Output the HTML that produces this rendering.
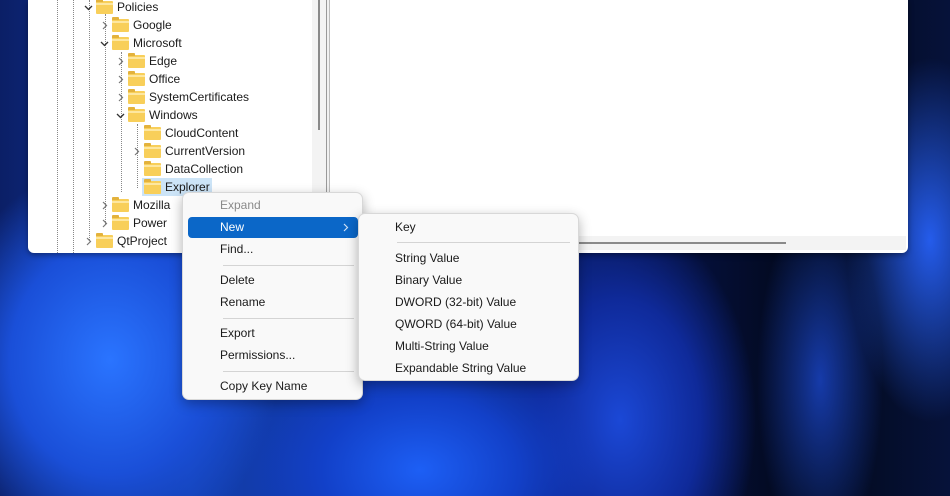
<!DOCTYPE html>
<html><head><meta charset="utf-8"><style>
*{margin:0;padding:0;box-sizing:border-box}
body{width:950px;height:496px;overflow:hidden;position:relative;font-family:"Liberation Sans",sans-serif;font-size:12px;color:#1a1a1a;
background:
radial-gradient(ellipse 120px 260px at 930px 240px,rgba(40,100,255,.9) 0%,transparent 70%),
radial-gradient(ellipse 90px 260px at 820px 380px,rgba(30,80,230,.7) 0%,transparent 70%),
radial-gradient(ellipse 220px 160px at 420px 470px,#1d5ff5 0%,#1240c8 45%,transparent 80%),
radial-gradient(ellipse 200px 230px at 110px 360px,#2a74ff 0%,#1a4fd8 50%,transparent 85%),
radial-gradient(ellipse 160px 240px at 620px 420px,#1b48d6 0%,#0f2a9a 50%,transparent 85%),
linear-gradient(90deg,#0b1f66 0%,#1340b0 20%,#0e2f98 45%,#06134a 68%,#020818 85%,#06123a 100%);}
.win{position:absolute;left:28px;top:0;width:880px;height:253px;background:#fff;border-radius:0 0 6px 6px;box-shadow:0 2px 6px rgba(0,0,0,.4);overflow:hidden}
.vs{position:absolute;left:284px;top:0;width:14px;height:253px;background:#f3f3f3}
.vs i{position:absolute;left:6px;top:0;width:2px;height:130px;background:#8a8a8a}
.div{position:absolute;left:298px;top:0;width:4px;height:253px;background:#f0f0f0;border-left:1px solid #999;border-right:1px solid #bbb}
.hs{position:absolute;left:302px;top:236px;width:576px;height:14px;background:#f3f3f3}
.hs i{position:absolute;left:248px;top:6px;width:208px;height:2px;background:#8a8a8a}
.dl{position:absolute;border-left:1px dotted #888;width:0}
.row{position:absolute;height:18px;line-height:18px;white-space:nowrap;font-size:12px}
.f{display:inline-block;position:absolute;top:3px;width:17px;height:13px;background:#f8cf5a;border-radius:1px}
.f:before{content:"";position:absolute;left:0;top:-2px;width:7px;height:3px;background:#e3b23c;border-radius:1px 1px 0 0}
.f:after{content:"";position:absolute;left:0;top:2px;width:17px;height:2px;background:#fde7a0}
.ch{position:absolute;top:5px;left:1px;width:9px;height:9px}
.sel{background:#cce4f7}
.menu{position:absolute;background:#f9f9f9;border:1px solid #d8d8d8;border-radius:7px;box-shadow:0 4px 12px rgba(0,0,0,.3)}
.mi{position:absolute;left:0;right:0;height:20px;line-height:20px;font-size:12px;color:#1a1a1a}
.sep{position:absolute;height:1px;background:#d4d4d4}
</style></head><body>
<svg width="0" height="0" style="position:absolute"><defs>
<symbol id="r" viewBox="0 0 9 9"><path d="M3 1 L6.5 4.5 L3 8" fill="none" stroke="#777" stroke-width="1.2"/></symbol>
<symbol id="d" viewBox="0 0 9 9"><path d="M1 3 L4.5 6.5 L8 3" fill="none" stroke="#333" stroke-width="1.3"/></symbol>
</defs></svg>
<div class="win">
 <div class="dl" style="left:29px;top:0;height:253px"></div>
 <div class="dl" style="left:45px;top:0;height:253px"></div>
 <div class="dl" style="left:61px;top:0;height:240px"></div>
 <div class="dl" style="left:77px;top:14px;height:210px"></div>
 <div class="dl" style="left:93px;top:52px;height:140px"></div>
 <div class="dl" style="left:109px;top:124px;height:64px"></div>
 <div class="vs"><i></i></div>
 <div class="div"></div>
 <div class="hs"><i></i></div>
</div>
<div style="position:absolute;left:0;top:0;width:330px;height:253px">
 <div class="row" style="top:-2px;left:83px"><svg class="ch"><use href="#d"/></svg><span class="f" style="left:13px"></span><span style="position:absolute;left:34px">Policies</span></div>
 <div class="row" style="top:16px;left:99px"><svg class="ch"><use href="#r"/></svg><span class="f" style="left:13px"></span><span style="position:absolute;left:34px">Google</span></div>
 <div class="row" style="top:34px;left:99px"><svg class="ch"><use href="#d"/></svg><span class="f" style="left:13px"></span><span style="position:absolute;left:34px">Microsoft</span></div>
 <div class="row" style="top:52px;left:115px"><svg class="ch"><use href="#r"/></svg><span class="f" style="left:13px"></span><span style="position:absolute;left:34px">Edge</span></div>
 <div class="row" style="top:70px;left:115px"><svg class="ch"><use href="#r"/></svg><span class="f" style="left:13px"></span><span style="position:absolute;left:34px">Office</span></div>
 <div class="row" style="top:88px;left:115px"><svg class="ch"><use href="#r"/></svg><span class="f" style="left:13px"></span><span style="position:absolute;left:34px">SystemCertificates</span></div>
 <div class="row" style="top:106px;left:115px"><svg class="ch"><use href="#d"/></svg><span class="f" style="left:13px"></span><span style="position:absolute;left:34px">Windows</span></div>
 <div class="row" style="top:124px;left:131px"><span class="f" style="left:13px"></span><span style="position:absolute;left:34px">CloudContent</span></div>
 <div class="row" style="top:142px;left:131px"><svg class="ch"><use href="#r"/></svg><span class="f" style="left:13px"></span><span style="position:absolute;left:34px">CurrentVersion</span></div>
 <div class="row" style="top:160px;left:131px"><span class="f" style="left:13px"></span><span style="position:absolute;left:34px">DataCollection</span></div>
 <div class="sel" style="position:absolute;left:142px;top:178px;width:70px;height:18px"></div>
 <div class="row" style="top:178px;left:131px"><span class="f" style="left:13px"></span><span style="position:absolute;left:34px">Explorer</span></div>
 <div class="row" style="top:196px;left:99px"><svg class="ch"><use href="#r"/></svg><span class="f" style="left:13px"></span><span style="position:absolute;left:34px">Mozilla</span></div>
 <div class="row" style="top:214px;left:99px"><svg class="ch"><use href="#r"/></svg><span class="f" style="left:13px"></span><span style="position:absolute;left:34px">Power</span></div>
 <div class="row" style="top:232px;left:83px"><svg class="ch"><use href="#r"/></svg><span class="f" style="left:13px"></span><span style="position:absolute;left:34px">QtProject</span></div>
</div>
<div class="menu" style="left:182px;top:192px;width:181px;height:208px">
 <div class="mi" style="top:2px;padding-left:37px;color:#8a8a8a">Expand</div>
 <div style="position:absolute;left:5px;top:24px;width:170px;height:21px;background:#0b67c8;border-radius:4px"></div>
 <div class="mi" style="top:24px;padding-left:37px;color:#fff">New<svg style="position:absolute;right:12px;top:6px;width:9px;height:9px"><path d="M3 1 L6.5 4.5 L3 8" fill="none" stroke="#cfe0f5" stroke-width="1.2"/></svg></div>
 <div class="mi" style="top:46px;padding-left:37px">Find...</div>
 <div class="sep" style="left:40px;right:8px;top:72px"></div>
 <div class="mi" style="top:77px;padding-left:37px">Delete</div>
 <div class="mi" style="top:99px;padding-left:37px">Rename</div>
 <div class="sep" style="left:40px;right:8px;top:125px"></div>
 <div class="mi" style="top:130px;padding-left:37px">Export</div>
 <div class="mi" style="top:152px;padding-left:37px">Permissions...</div>
 <div class="sep" style="left:40px;right:8px;top:178px"></div>
 <div class="mi" style="top:183px;padding-left:37px">Copy Key Name</div>
</div>
<div class="menu" style="left:358px;top:213px;width:221px;height:168px">
 <div class="mi" style="top:3px;padding-left:36px">Key</div>
 <div class="sep" style="left:38px;right:8px;top:28px"></div>
 <div class="mi" style="top:34px;padding-left:36px">String Value</div>
 <div class="mi" style="top:56px;padding-left:36px">Binary Value</div>
 <div class="mi" style="top:78px;padding-left:36px">DWORD (32-bit) Value</div>
 <div class="mi" style="top:100px;padding-left:36px">QWORD (64-bit) Value</div>
 <div class="mi" style="top:122px;padding-left:36px">Multi-String Value</div>
 <div class="mi" style="top:144px;padding-left:36px">Expandable String Value</div>
</div>
</body></html>
